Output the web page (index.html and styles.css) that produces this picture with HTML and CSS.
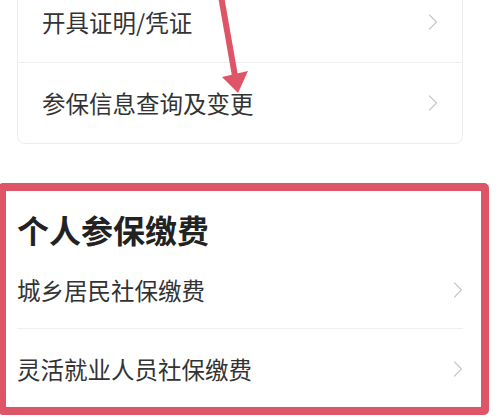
FILE: index.html
```html
<!DOCTYPE html>
<html lang="zh-CN">
<head>
<meta charset="utf-8">
<title>社保服务</title>
<link rel="stylesheet" href="styles.css">
</head>
<body>
<div class="page">
  <div class="card">
    <div class="row">
      <span class="label">开具证明/凭证</span>
      <svg class="chev" viewBox="0 0 10 16" width="10" height="16"><polyline points="1.5,1 8.5,8 1.5,15" /></svg>
    </div>
    <div class="row">
      <span class="label">参保信息查询及变更</span>
      <svg class="chev" viewBox="0 0 10 16" width="10" height="16"><polyline points="1.5,1 8.5,8 1.5,15" /></svg>
    </div>
  </div>

  <section class="box">
    <h2 class="title">个人参保缴费</h2>
    <div class="list">
      <div class="item first">
        <span class="label">城乡居民社保缴费</span>
        <svg class="chev" viewBox="0 0 10 16" width="10" height="16"><polyline points="1.5,1 8.5,8 1.5,15" /></svg>
      </div>
      <div class="item second">
        <span class="label">灵活就业人员社保缴费</span>
        <svg class="chev" viewBox="0 0 10 16" width="10" height="16"><polyline points="1.5,1 8.5,8 1.5,15" /></svg>
      </div>
    </div>
  </section>

  <svg class="arrow" viewBox="0 0 499 420" width="499" height="420">
    <line x1="221" y1="-4" x2="235" y2="76" />
    <polygon points="222,77 248,71 238,93" />
  </svg>
</div>
</body>
</html>
```

FILE: styles.css
```css
html, body {
  margin: 0;
  padding: 0;
  background: #ffffff;
}

body {
  font-family: "Noto Sans CJK SC", "Noto Sans", sans-serif;
  color: #333333;
}

.page {
  position: relative;
  width: 499px;
  height: 420px;
  overflow: hidden;
}

.card {
  box-sizing: border-box;
  width: 446px;
  margin: -19px 0 0 17px;
  border: 1px solid #ededed;
  border-radius: 0 0 8px 8px;
  background: #ffffff;
}

.row {
  display: flex;
  align-items: center;
  justify-content: space-between;
  height: 80px;
  padding: 0 24px 0 24px;
  font-size: 23.5px;
  color: #333333;
}

.row + .row {
  border-top: 1px solid #efefef;
}

.chev {
  display: block;
  flex: none;
}

.chev polyline {
  fill: none;
  stroke: #c9c9c9;
  stroke-width: 1.2;
  stroke-linecap: round;
  stroke-linejoin: round;
}

.box {
  box-sizing: border-box;
  width: 491px;
  margin: 39px 0 0 -2px;
  border: 8px solid #de5567;
  border-radius: 5px;
  padding: 0 18px 0 11px;
  background: #ffffff;
}

.title {
  margin: 0;
  padding-top: 18px;
  font-size: 32px;
  line-height: 40px;
  font-weight: 700;
  color: #222222;
}

.list {
  margin-top: 3px;
}

.item {
  display: flex;
  align-items: center;
  justify-content: space-between;
  font-size: 23.5px;
  color: #333333;
}

.item.first {
  height: 76px;
}

.item.second {
  height: 79px;
  padding-top: 2px;
  box-sizing: border-box;
  border-top: 1px solid #f0f0f0;
}

.arrow {
  position: absolute;
  left: 0;
  top: 0;
  pointer-events: none;
}

.arrow line {
  stroke: #de5567;
  stroke-width: 6;
}

.arrow polygon {
  fill: #de5567;
}
```
